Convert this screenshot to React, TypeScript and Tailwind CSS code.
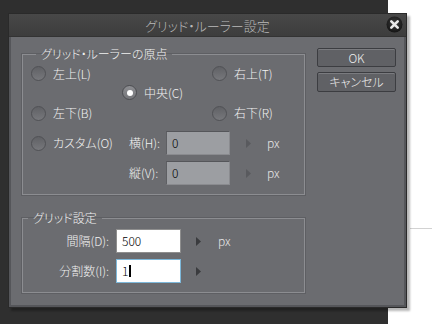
import React from 'react';

const font = "font-['Noto_Sans_CJK_JP','Liberation_Sans',sans-serif] [font-feature-settings:'palt'] font-light";

function Radio({ checked = false }: { checked?: boolean }) {
  return (
    <span
      className={`w-[15px] h-[15px] rounded-full border flex items-center justify-center shrink-0 ${
        checked ? 'border-[#4c4d51] bg-linear-to-b from-[#8d8e92] to-[#75767a]' : 'border-[#505155] bg-linear-to-b from-[#606165] to-[#77787c]'
      }`}
    >
      {checked && <span className="w-[6px] h-[6px] rounded-full bg-white" />}
    </span>
  );
}

function Option({ label, checked }: { label: string; checked?: boolean }) {
  return (
    <div className="flex items-center gap-[7px]">
      <Radio checked={checked} />
      <span className="text-[12px] text-[#f2f2f2] leading-none">{label}</span>
    </div>
  );
}

function Arrow({ color }: { color: string }) {
  return (
    <svg width="5" height="9" viewBox="0 0 5 9" className="shrink-0">
      <polygon points="0,0 5,4.5 0,9" fill={color} />
    </svg>
  );
}

function Legend({ children }: { children: React.ReactNode }) {
  return <legend className="ml-[5px] px-[5px] text-[12px] leading-[16px] text-[#f2f2f2]">{children}</legend>;
}

export default function App() {
  return (
    <div className={`w-[432px] h-[324px] flex relative overflow-hidden ${font}`}>
      <div className="w-[388px] h-full bg-[#2f2f2f]" />
      <div className="flex-1 h-full bg-white">
        <div className="mt-[228px] ml-[22px] h-px bg-[#d2d2d2]" />
      </div>

      {/* dialog */}
      <div className="absolute left-[8px] top-[13px] w-[399px] h-[295px] flex flex-col border border-[#2a2a2a] shadow-[3px_3px_2px_rgba(0,0,0,0.28)]">
        <div className="h-[23px] bg-linear-to-b from-[#484848] to-[#3d3d3d] relative flex items-center justify-center border-b border-[#333]">
          <span className="text-[13px] text-[#b9b9b9] leading-none">グリッド・ルーラー設定</span>
          <svg width="17" height="17" viewBox="0 0 17 17" className="absolute right-[3px] top-[2px]">
            <defs>
              <radialGradient id="cg" cx="50%" cy="40%" r="60%">
                <stop offset="0%" stopColor="#3a3a3a" />
                <stop offset="100%" stopColor="#151515" />
              </radialGradient>
            </defs>
            <circle cx="8.5" cy="8.5" r="8" fill="url(#cg)" />
            <path d="M5.3 5.3 L11.7 11.7 M11.7 5.3 L5.3 11.7" stroke="#e8e8e8" strokeWidth="2.6" strokeLinecap="round" />
          </svg>
        </div>

        <div className="flex-1 bg-[#6b6c70] flex pl-[13px] pt-[9px] shadow-[inset_2px_0_0_#55565a,inset_-2px_0_0_#55565a,inset_0_-2px_0_#55565a]">
          <div className="w-[283px] flex flex-col">
            <fieldset className="border border-[#8c8d91] pb-[9px] pl-[8px] shadow-[0_0_0_1px_#5e5f63]">
              <Legend>グリッド・ルーラーの原点</Legend>
              <div className="grid grid-cols-[91px_90px_1fr] grid-rows-[19px_19px_19px] mt-[2px]">
                <div className="flex items-center"><Option label="左上(L)" /></div>
                <div />
                <div className="flex items-center"><Option label="右上(T)" /></div>
                <div />
                <div className="flex items-center"><Option label="中央(C)" checked /></div>
                <div />
                <div className="flex items-center mt-[3px]"><Option label="左下(B)" /></div>
                <div />
                <div className="flex items-center mt-[3px]"><Option label="右下(R)" /></div>
              </div>
              <div className="flex mt-[10px]">
                <div className="w-[98px] h-[24px] flex items-center"><Option label="カスタム(O)" /></div>
                <div className="flex flex-col gap-[6px]">
                  {['横(H):', '縦(V):'].map((l) => (
                    <div key={l} className="flex items-center h-[24px]">
                      <span className="w-[37px] text-[12px] text-[#f2f2f2] leading-none">{l}</span>
                      <div className="w-[64px] h-[24px] bg-[#9c9ea2] border border-[#8a8b8f] border-t-[#55565a] border-l-[#5e5f63] flex items-center pl-[5px] text-[12px] text-black leading-none">0</div>
                      <div className="ml-[16px]"><Arrow color="#595a5e" /></div>
                      <span className="ml-[16px] text-[12px] text-[#e6e6e6] leading-none">px</span>
                    </div>
                  ))}
                </div>
              </div>
            </fieldset>

            <fieldset className="mt-[15px] border border-[#8c8d91] pb-[9px] shadow-[0_0_0_1px_#5e5f63]">
              <Legend>グリッド設定</Legend>
              <div className="flex flex-col gap-[6px] mt-[3px]">
                <div className="flex items-center h-[24px]">
                  <span className="w-[93px] pr-[7px] text-right text-[12px] text-[#f2f2f2] leading-none">間隔(D):</span>
                  <div className="w-[65px] h-[24px] bg-white border border-[#8e8e8e] flex items-center pl-[5px] text-[12px] text-black leading-none">500</div>
                  <div className="ml-[15px]"><Arrow color="#3a3b3e" /></div>
                  <span className="ml-[17px] text-[12px] text-[#e6e6e6] leading-none">px</span>
                </div>
                <div className="flex items-center h-[24px]">
                  <span className="w-[93px] pr-[7px] text-right text-[12px] text-[#f2f2f2] leading-none">分割数(I):</span>
                  <div className="w-[65px] h-[24px] bg-white border border-[#7db8da] flex items-center pl-[5px] text-[12px] text-black leading-none">
                    1<span className="ml-[1px] w-[2px] h-[12px] bg-black" />
                  </div>
                  <div className="ml-[15px]"><Arrow color="#3a3b3e" /></div>
                </div>
              </div>
            </fieldset>
          </div>

          <div className="ml-[12px] pt-[2px] flex flex-col gap-[5px]">
            <button className="w-[79px] h-[19px] rounded-[2px] border border-[#3c3d41] bg-[#606165] shadow-[inset_0_1px_0_#7a7b7f] text-[12px] text-[#f0f0f0] leading-none">OK</button>
            <button className="w-[79px] h-[20px] rounded-[2px] border border-[#3c3d41] bg-[#606165] shadow-[inset_0_1px_0_#7a7b7f] text-[12px] text-[#f0f0f0] leading-none">キャンセル</button>
          </div>
        </div>
      </div>
    </div>
  );
}
